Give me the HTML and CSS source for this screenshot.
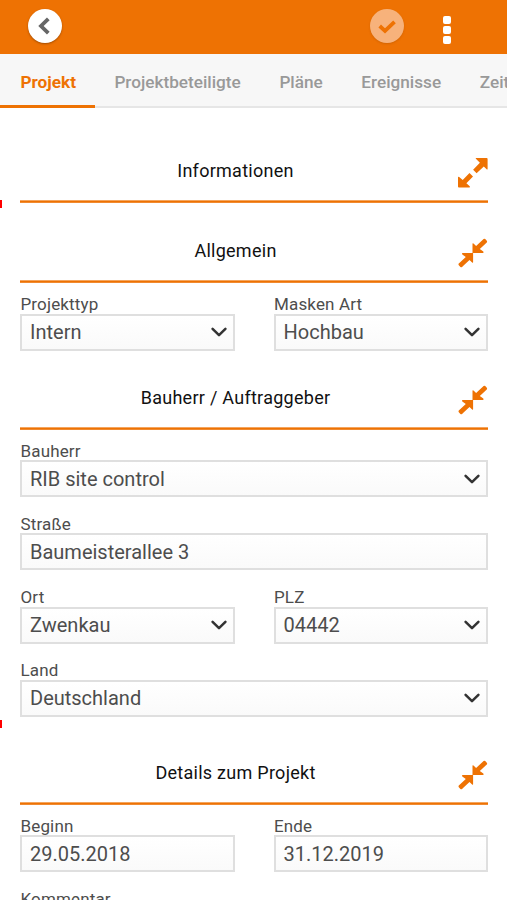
FILE: index.html
```html
<!DOCTYPE html>
<html lang="de">
<head>
<meta charset="utf-8">
<meta name="viewport" content="width=device-width, initial-scale=1">
<title>Projekt</title>
<link rel="stylesheet" href="styles.css">
</head>
<body>
<svg class="defs" width="0" height="0" aria-hidden="true">
  <symbol id="chevron" viewBox="0 0 16 10"><path d="M1.600 1.800 8 8.200l6.400-6.400" fill="none" stroke="#333" stroke-width="2.500" stroke-linecap="round" stroke-linejoin="round"/></symbol>
  <symbol id="collapse" viewBox="0 0 30 30">
    <path id="arrow" d="M14.500 14.900V6q0-1.200 1-.400l2.600 2.400L25.600 1q.8-.6 1.600.1l1.600 1.700q.7.9 0 1.600L21.800 11.100l3.500 2.500q.9 1.200-.4 1.300z"/>
    <use href="#arrow" transform="rotate(180 14.800 15)"/>
  </symbol>
  <symbol id="expand" viewBox="0 0 30 30"><path d="M18.200 0H28.700q.900 0 .900.900V10.900q-.200.900-1 .300l-2.800-2.600-7.200 6.600-3.500-3.500 6.800-6.900-4-4.100q-.500-1.100.3-1.600zM.9 29.500H11.400q1-.3.300-1.300L8.400 25.200l6.600-6.600-3.500-3.500-6.800 7-3.500-3.100q-1.200-.8-1.200.5V28.500q0 1 .9 1z"/></symbol>
</svg>
<header class="bar">
  <button class="round" aria-label="Zurück"><svg width="34" height="34" viewBox="0 0 34 34"><path d="M20.300 9.800 13 17l7.300 7.200" fill="none" stroke="#666" stroke-width="3.800"/></svg></button>
  <button class="round confirm" aria-label="Speichern"><svg width="34" height="34" viewBox="0 0 34 34"><path d="M9.700 17 15 21.800 24.500 12.800" fill="none" stroke="#ee7203" stroke-width="3.800"/></svg></button>
  <button class="more" aria-label="Menü"><i></i><i></i><i></i></button>
</header>
<nav class="tabs">
  <a class="tab active">Projekt</a><a class="tab">Projektbeteiligte</a><a class="tab">Pläne</a><a class="tab">Ereignisse</a><a class="tab">Zeit</a>
</nav>
<main class="form">
  <i class="mark mark-top"></i><i class="mark mark-bottom"></i>
  <section class="section info">
    <h2 class="title"><span>Informationen</span><svg class="toggle"><use href="#expand"/></svg></h2>
  </section>
  <section class="section general">
    <h2 class="title"><span>Allgemein</span><svg class="toggle"><use href="#collapse"/></svg></h2>
    <div class="row">
      <div class="field"><label>Projekttyp</label><div class="box">Intern<svg class="chev"><use href="#chevron"/></svg></div></div>
      <div class="field"><label>Masken Art</label><div class="box">Hochbau<svg class="chev"><use href="#chevron"/></svg></div></div>
    </div>
  </section>
  <section class="section client">
    <h2 class="title"><span>Bauherr / Auftraggeber</span><svg class="toggle"><use href="#collapse"/></svg></h2>
    <div class="row">
      <div class="field"><label>Bauherr</label><div class="box">RIB site control<svg class="chev"><use href="#chevron"/></svg></div></div>
    </div>
    <div class="row">
      <div class="field"><label>Straße</label><div class="box">Baumeisterallee 3</div></div>
    </div>
    <div class="row">
      <div class="field"><label>Ort</label><div class="box">Zwenkau<svg class="chev"><use href="#chevron"/></svg></div></div>
      <div class="field"><label>PLZ</label><div class="box">04442<svg class="chev"><use href="#chevron"/></svg></div></div>
    </div>
    <div class="row">
      <div class="field"><label>Land</label><div class="box">Deutschland<svg class="chev"><use href="#chevron"/></svg></div></div>
    </div>
  </section>
  <section class="section">
    <h2 class="title"><span>Details zum Projekt</span><svg class="toggle"><use href="#collapse"/></svg></h2>
    <div class="row">
      <div class="field"><label>Beginn</label><div class="box">29.05.2018</div></div>
      <div class="field"><label>Ende</label><div class="box">31.12.2019</div></div>
    </div>
    <div class="row">
      <div class="field"><label>Kommentar</label><div class="box"></div></div>
    </div>
  </section>
</main>
</body>
</html>
```

FILE: styles.css
```css
* { box-sizing: border-box; }
html { height: 100%; overflow: hidden; }
body {
  margin: 0;
  height: 900px;
  overflow: hidden;
  background: #fff;
  color: #4d4d4d;
  font-family: Roboto, "Liberation Sans", sans-serif;
}
button { border: 0; padding: 0; background: none; }
.defs { display: block; }
.bar {
  display: flex;
  align-items: flex-start;
  height: 54px;
  padding: 9px 56px 0 28px;
  background: #ee7203;
}
.round {
  width: 34px;
  height: 34px;
  border-radius: 50%;
  background: #fff;
  box-shadow: 0 1px 2px rgba(90, 40, 0, .5);
}
.round svg { display: block; }
.confirm {
  margin-left: auto;
  background: #f7b27b;
  box-shadow: 0 1px 2px rgba(150, 70, 0, .3);
}
.more {
  display: flex;
  flex-direction: column;
  gap: 2px;
  margin: 7px 0 0 39px;
}
.more i { width: 8px; height: 8px; border-radius: 2px; background: #fff; }
.tabs {
  display: flex;
  height: 54px;
  overflow: hidden;
  background: linear-gradient(#e6e6e6, #e6e6e6) 0 100% / 100% 2px no-repeat #f7f7f7;
}
.tab {
  flex: none;
  height: 54px;
  padding: 0 19.200px 0 19.400px;
  color: #999;
  font-size: 17.200px;
  font-weight: 500;
  line-height: 56px;
}
.tab.active {
  width: 95px;
  padding: 0 0 0 20.500px;
  color: #ee7203;
  font-weight: 700;
  background: linear-gradient(#ee7203, #ee7203) 0 100% / 100% 3px no-repeat;
}
.form { position: relative; padding: 28px 19px 0 20px; }
.mark { position: absolute; left: 0; width: 2px; height: 8px; background: #f00; }
.mark-top { top: 92px; }
.mark-bottom { top: 612px; }
.info { padding-bottom: 13.700px; }
.general { padding-bottom: 6.500px; }
.client { padding-bottom: 15.300px; }
.title {
  position: relative;
  display: flex;
  justify-content: center;
  height: 66.700px;
  margin: 0;
  padding-top: 20px;
  background: linear-gradient(#f4a55e 1px, #ee7203 1px 2px, #f08a30 2px) 0 100% / 100% 3px no-repeat;
  color: #111;
  font-size: 18px;
  font-weight: 400;
  line-height: 29px;
  letter-spacing: .27px;
}
.title span { padding-right: 37px; }
.toggle { position: absolute; right: 0; top: 22px; width: 30px; height: 30px; fill: #ee7203; }
.row { display: grid; grid-auto-flow: column; grid-auto-columns: 1fr; gap: 39px; height: 73.300px; }
.field label {
  display: block;
  height: 30.500px;
  padding: 11px 0 0 .500px;
  font-size: 17px;
  line-height: 20px;
  letter-spacing: .15px;
}
.box {
  display: flex;
  align-items: center;
  justify-content: space-between;
  height: 37px;
  padding: 0 6px 0 8px;
  border: 2px solid #dfdfdf;
  background: linear-gradient(#fff, #fafafa);
  font-size: 20px;
}
.chev { width: 16px; height: 10px; }
```
